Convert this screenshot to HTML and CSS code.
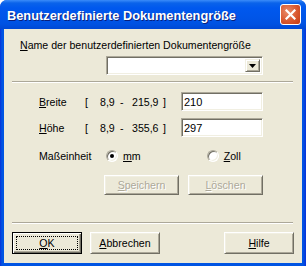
FILE: index.html
```
<!DOCTYPE html>
<html lang="de">
<head>
  <meta charset="UTF-8">
  <title>Benutzerdefinierte Dokumentengröße</title>
  <link rel="stylesheet" href="styles.css">
</head>
<body>
  <div class="window">
    <div class="titlebar">
      <span class="title">Benutzerdefinierte Dokumentengröße</span>
      <button class="close" title="Schließen">
        <svg width="11" height="11" viewBox="0 0 11 11">
          <path d="M1.5 1.5 L9.5 9.5 M9.5 1.5 L1.5 9.5" stroke="#fff" stroke-width="2.2" stroke-linecap="square"/>
        </svg>
      </button>
    </div>
    <div class="client">
      <label class="name-label"><u>N</u>ame der benutzerdefinierten Dokumentengröße</label>
      <div class="combo">
        <span class="combo-field"></span>
        <span class="combo-btn">
          <svg width="7" height="4" viewBox="0 0 7 4"><path d="M0 0 H7 L3.5 4 Z" fill="#000"/></svg>
        </span>
      </div>
      <div class="sep"></div>

      <div class="size-row">
        <span class="lbl"><u>B</u>reite</span>
        <span class="range"><span>[</span><span>8,9</span><span>-</span><span>215,9</span><span>]</span></span>
        <input class="edit" type="text" value="210">
      </div>
      <div class="size-row second">
        <span class="lbl"><u>H</u>öhe</span>
        <span class="range"><span>[</span><span>8,9</span><span>-</span><span>355,6</span><span>]</span></span>
        <input class="edit" type="text" value="297">
      </div>

      <div class="unit-row">
        <span class="lbl">Maßeinheit</span>
        <span class="radio checked"></span><span class="radio-text"><u>m</u>m</span>
        <span class="radio second-radio"></span><span class="radio-text"><u>Z</u>oll</span>
      </div>

      <div class="action-row">
        <button class="btn" disabled><u>S</u>peichern</button>
        <button class="btn" disabled><u>L</u>öschen</button>
      </div>

      <div class="sep lower"></div>

      <div class="footer">
        <button class="btn default"><u>O</u>K</button>
        <button class="btn"><u>A</u>bbrechen</button>
        <button class="btn help"><u>H</u>ilfe</button>
      </div>
    </div>
  </div>
</body>
</html>
```

FILE: styles.css
```
body {
  margin: 0;
  background: #fff;
  font-family: "Liberation Sans", Arial, sans-serif;
  font-size: 10.6px;
  color: #000;
}
u {
  text-decoration: underline;
  text-underline-offset: 1px;
}

.window {
  width: 306px;
  height: 266px;
  box-sizing: border-box;
  display: flex;
  flex-direction: column;
  background: linear-gradient(90deg, #0831d9 0, #0054e3 2px, #0054e3 303px, #0831d9 306px);
  border-radius: 7px 7px 0 0;
  overflow: hidden;
}
.titlebar {
  height: 29px;
  flex: none;
  display: flex;
  align-items: center;
  justify-content: space-between;
  padding: 0 5px 0 7px;
  background: linear-gradient(#3b8cf9 0, #0a63ea 3px, #0058ee 8px, #0055e8 18px, #0052e2 24px, #0048d4 29px);
}
.title {
  color: #fff;
  font-weight: bold;
  font-size: 12.8px;
  text-shadow: 1px 1px #0a1f7a;
  padding-top: 1px;
}
.close {
  width: 21px;
  height: 21px;
  padding: 0;
  border: 1px solid #fff;
  border-radius: 3px;
  background: radial-gradient(circle at 35% 35%, #e98c6b 0, #d9582f 55%, #c43a12 100%);
  display: flex;
  align-items: center;
  justify-content: center;
  box-sizing: border-box;
}

.client {
  flex: 1;
  margin: 0 4px 3px 4px;
  background: #ece9d8;
  padding: 10px 9px 0 8px;
  display: flex;
  flex-direction: column;
}
.name-label {
  margin-left: 8px;
  line-height: 13px;
}

/* sunken classic borders */
.combo, .edit {
  box-sizing: border-box;
  border: 1px solid;
  border-color: #aca899 #fff #fff #aca899;
  box-shadow: inset 1px 1px #716f64, inset -1px -1px #f1efe2;
  background: #fff;
}
.combo {
  margin: 4px 0 0 94px;
  width: 157px;
  height: 19px;
  display: flex;
  padding: 2px;
}
.combo-field {
  flex: 1;
}
.combo-btn {
  width: 15px;
  box-sizing: border-box;
  background: #ece9d8;
  border: 1px solid;
  border-color: #f1efe2 #716f64 #716f64 #f1efe2;
  box-shadow: inset 1px 1px #fff, inset -1px -1px #aca899;
  display: flex;
  align-items: center;
  justify-content: center;
  padding-top: 1px;
}

.sep {
  border-top: 1px solid #aca899;
  border-bottom: 1px solid #fff;
  height: 0;
  margin-top: 6px;
}
.sep.lower {
  margin-top: 27px;
}

.size-row {
  display: flex;
  align-items: center;
  margin-top: 9px;
  height: 19px;
}
.size-row.second {
  margin-top: 7px;
}
.lbl {
  margin-left: 27px;
  width: 46px;
}
.range {
  display: flex;
  width: 96px;
}
.range span:nth-child(1) { width: 15px; }
.range span:nth-child(2) { width: 20px; }
.range span:nth-child(3) { width: 12px; }
.range span:nth-child(4) { width: 31px; }
.edit {
  width: 82px;
  height: 19px;
  padding: 0 2px;
  font: inherit;
  font-size: 11px;
  outline: none;
}

.unit-row {
  display: flex;
  align-items: center;
  margin-top: 12px;
  height: 13px;
}
.unit-row .lbl {
  width: 67px;
}
.radio {
  width: 12px;
  height: 12px;
  box-sizing: border-box;
  border-radius: 50%;
  border: 1px solid;
  border-color: #aca899 #fff #fff #aca899;
  background: #fff;
  box-shadow: inset 1px 1px #716f64, inset -1px -1px #f1efe2;
  display: flex;
  align-items: center;
  justify-content: center;
  margin-right: 5px;
}
.radio.checked::after {
  content: "";
  width: 4px;
  height: 4px;
  border-radius: 50%;
  background: #000;
}
.second-radio {
  margin-left: 66px;
}

.btn {
  font: inherit;
  color: #000;
  box-sizing: border-box;
  padding: 0;
  background: #ece9d8;
  border: 1px solid;
  border-color: #fff #716f64 #716f64 #fff;
  box-shadow: inset 1px 1px #f1efe2, inset -1px -1px #aca899;
  position: relative;
}
.btn:disabled {
  color: #aca899;
  text-shadow: 1px 1px #fff;
}
.action-row {
  display: flex;
  gap: 9px;
  margin: 13px 0 0 92px;
}
.action-row .btn {
  width: 75px;
  height: 20px;
}

.footer {
  display: flex;
  gap: 8px;
  margin-top: 8px;
}
.footer .btn {
  width: 70px;
  height: 22px;
}
.footer .help {
  margin-left: auto;
  margin-right: -1px;
}
.btn.default {
  border: 1px solid #000;
  box-shadow: inset 1px 1px #fff, inset -1px -1px #716f64, inset -2px -2px #aca899;
}
.btn.default::after {
  content: "";
  position: absolute;
  inset: 3px;
  border: 1px dotted #000;
}
```
